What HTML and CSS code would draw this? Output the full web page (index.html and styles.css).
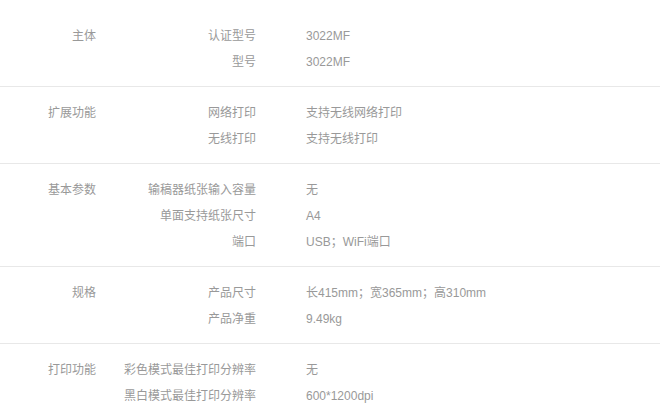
FILE: index.html
```html
<!DOCTYPE html>
<html lang="zh-CN">
<head>
<meta charset="utf-8">
<link rel="stylesheet" href="styles.css">
</head>
<body>
<div class="specs">
  <div class="group">
    <div class="group-name">主体</div>
    <div class="items">
      <div class="item"><span class="key">认证型号</span><span class="val">3022MF</span></div>
      <div class="item"><span class="key">型号</span><span class="val">3022MF</span></div>
    </div>
  </div>
  <div class="group">
    <div class="group-name">扩展功能</div>
    <div class="items">
      <div class="item"><span class="key">网络打印</span><span class="val">支持无线网络打印</span></div>
      <div class="item"><span class="key">无线打印</span><span class="val">支持无线打印</span></div>
    </div>
  </div>
  <div class="group">
    <div class="group-name">基本参数</div>
    <div class="items">
      <div class="item"><span class="key">输稿器纸张输入容量</span><span class="val">无</span></div>
      <div class="item"><span class="key">单面支持纸张尺寸</span><span class="val">A4</span></div>
      <div class="item"><span class="key">端口</span><span class="val">USB；WiFi端口</span></div>
    </div>
  </div>
  <div class="group">
    <div class="group-name">规格</div>
    <div class="items">
      <div class="item"><span class="key">产品尺寸</span><span class="val">长415mm；宽365mm；高310mm</span></div>
      <div class="item"><span class="key">产品净重</span><span class="val">9.49kg</span></div>
    </div>
  </div>
  <div class="group">
    <div class="group-name">打印功能</div>
    <div class="items">
      <div class="item"><span class="key">彩色模式最佳打印分辨率</span><span class="val">无</span></div>
      <div class="item"><span class="key">黑白模式最佳打印分辨率</span><span class="val">600*1200dpi</span></div>
    </div>
  </div>
</div>
</body>
</html>
```
FILE: styles.css
```css
html, body {
  margin: 0;
  padding: 0;
  background: #fff;
}
body {
  font-family: "Liberation Sans", "Noto Sans CJK SC", sans-serif;
  font-size: 12px;
  color: #999;
}
.specs {
  padding-top: 10px;
}
.group {
  display: flex;
  padding: 13px 0 11px;
  border-bottom: 1px solid #e8e8e8;
}
.group-name {
  width: 96px;
  text-align: right;
  line-height: 26px;
  flex: none;
}
.items {
  display: flex;
  flex-direction: column;
}
.item {
  display: flex;
  line-height: 26px;
  height: 26px;
}
.key {
  width: 160px;
  text-align: right;
  flex: none;
}
.val {
  padding-left: 50px;
}
```
